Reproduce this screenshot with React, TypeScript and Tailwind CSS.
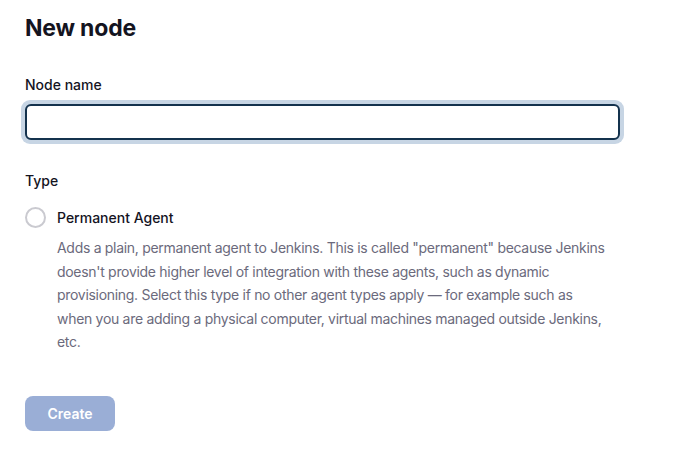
import React from 'react';

const font = { fontFamily: 'Inter, "Noto Sans", sans-serif' };

export default function App() {
  return (
    <div className="min-h-screen bg-white text-[#14141f]" style={font}>
      <div className="pl-[25px] pt-[13px]">
        {/* Title */}
        <h1 className="text-[23px] leading-[30px] font-bold tracking-[-0.2px]">New node</h1>

        {/* Node name */}
        <div className="mt-[32px]">
          <label className="block text-[14px] leading-[20px] font-medium">Node name</label>
          <div className="mt-[5px] -ml-[4px] w-[603px] rounded-[9px] bg-[#c7d5e4] p-[4px]">
            <input
              type="text"
              className="block h-[36px] w-full rounded-[6px] border-2 border-[#14324d] bg-white px-3 text-[14px] outline-none"
            />
          </div>
        </div>

        {/* Type */}
        <div className="mt-[27px]">
          <div className="text-[14px] leading-[20px] font-medium">Type</div>
          <label className="mt-[16px] flex items-center gap-[11px]">
            <span className="h-[21px] w-[21px] rounded-full border-2 border-[#cacad0] bg-white" />
            <span className="text-[14px] leading-[20px] font-medium">Permanent Agent</span>
          </label>
          <p className="mt-[8px] ml-[32px] max-w-[600px] text-[14px] leading-[23.5px] tracking-[-0.3px] text-[#6b6a7c]">
            Adds a plain, permanent agent to Jenkins. This is called "permanent" because Jenkins
            <br />
            doesn't provide higher level of integration with these agents, such as dynamic
            <br />
            provisioning. Select this type if no other agent types apply — for example such as
            <br />
            when you are adding a physical computer, virtual machines managed outside Jenkins,
            <br />
            etc.
          </p>
        </div>

        {/* Submit */}
        <button
          type="button"
          className="mt-[42px] h-[35px] w-[90px] rounded-[8px] bg-[#9aaed6] text-[14px] font-semibold text-white"
        >
          Create
        </button>
      </div>
    </div>
  );
}
